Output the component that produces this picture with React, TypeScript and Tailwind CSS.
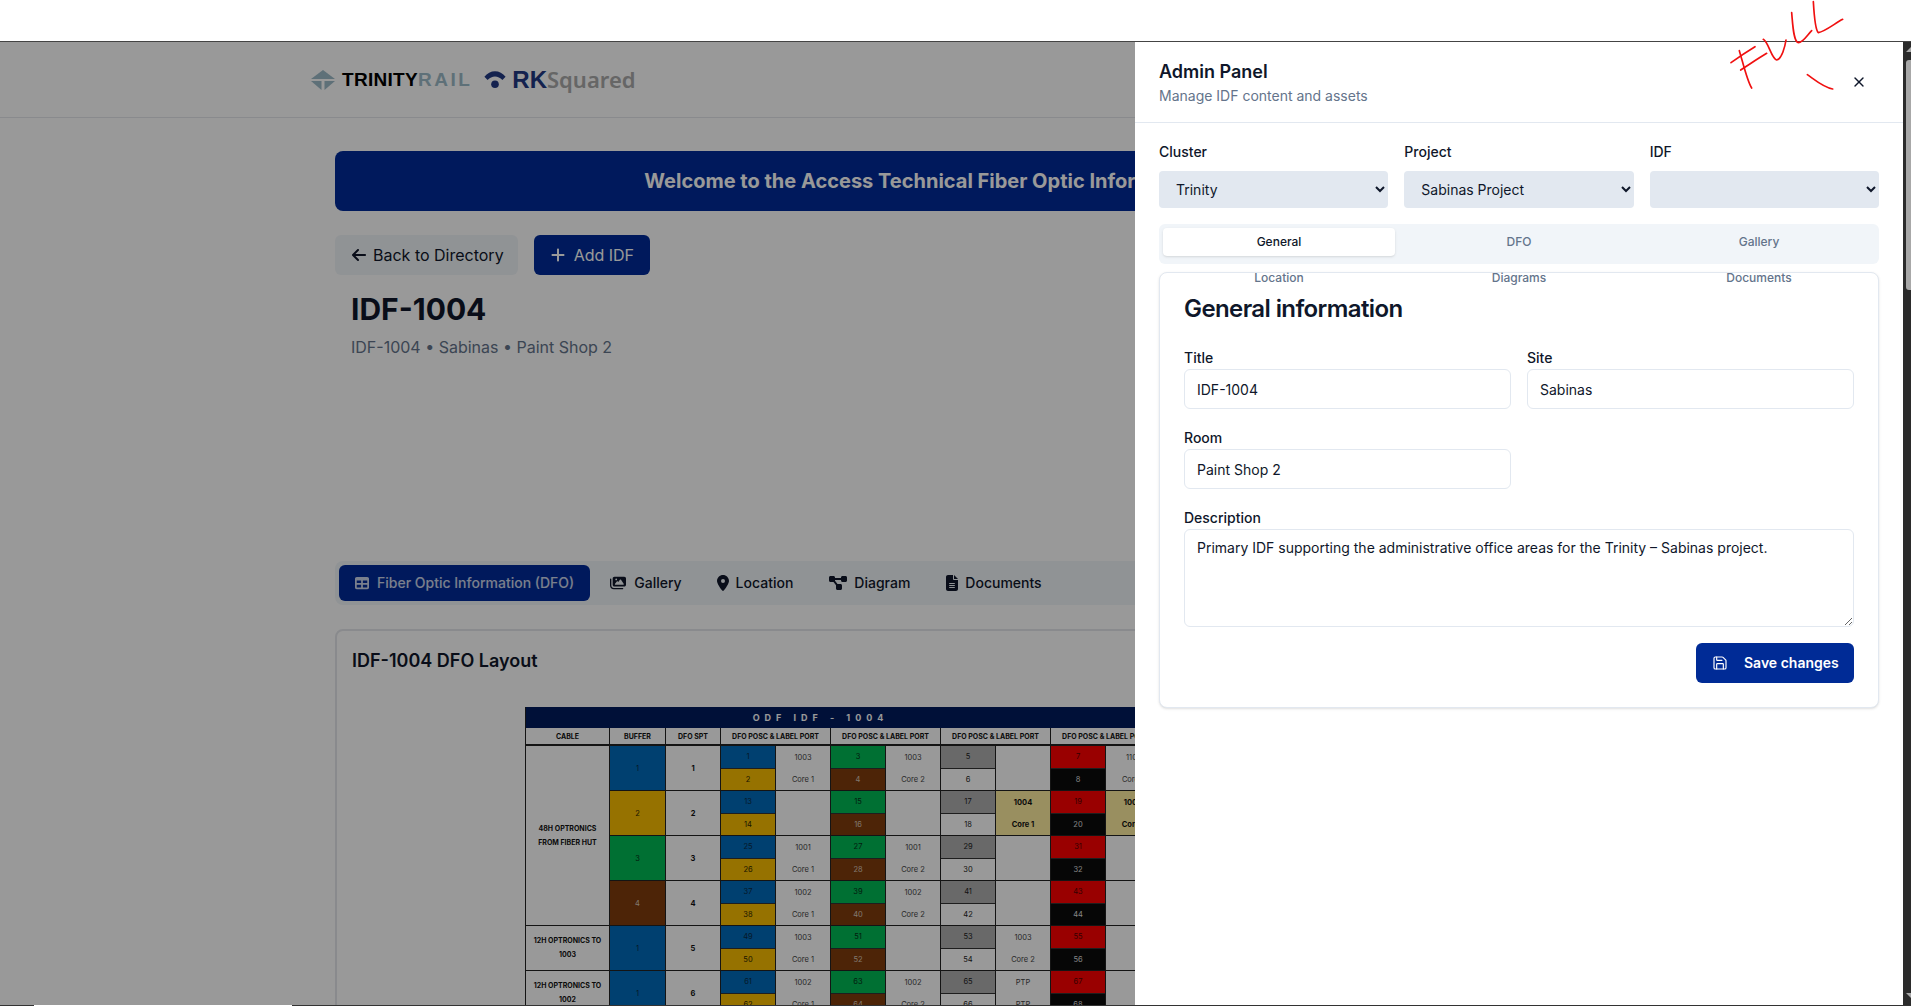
import { X, Save } from "lucide-react";
import { FaArrowLeft, FaPlus, FaTable, FaImages, FaLocationDot, FaDiagramProject, FaFileLines } from "react-icons/fa6";

const blue = "bg-[#006bbb] text-[#0b2a44]";
const yellow = "bg-[#fabf00] text-[#2e2500]";
const green = "bg-[#00bb55] text-[#063018]";
const brown = "bg-[#803c0d] text-[#d8c8b8]";
const gray = "bg-[#b0b0b0] text-[#1a1a1a]";
const white = "bg-white text-[#222]";
const red = "bg-[#ff0000] text-[#500]";
const black = "bg-[#0a0a0a] text-[#ddd]";

function Port({ a, b, ca, cb }: { a: string; b: string; ca: string; cb: string }) {
  return (
    <div className="flex flex-col border-r border-b border-[#222]">
      <div className={`flex-1 flex items-center justify-center border-b border-[#333] ${ca}`}>{a}</div>
      <div className={`flex-1 flex items-center justify-center ${cb}`}>{b}</div>
    </div>
  );
}

function Label({ a, b, tan }: { a?: string; b?: string; tan?: boolean }) {
  return (
    <div className={`flex flex-col border-r border-b border-[#222] ${tan ? "bg-[#ffeea0] font-bold text-[#111]" : "text-[#444]"}`}>
      <div className="flex-1 flex items-center justify-center">{a}</div>
      <div className="flex-1 flex items-center justify-center">{b}</div>
    </div>
  );
}

const rows = [
  { buf: "1", bufc: blue, spt: "1", p: [["1", "2", "1003", "Core 1"], ["3", "4", "1003", "Core 2"], ["5", "6", "", ""], ["7", "8", "1101", "Core 1"]] },
  { buf: "2", bufc: yellow, spt: "2", p: [["13", "14", "", ""], ["15", "16", "", ""], ["17", "18", "1004", "Core 1", "t"], ["19", "20", "1004", "Core 1", "t"]] },
  { buf: "3", bufc: green, spt: "3", p: [["25", "26", "1001", "Core 1"], ["27", "28", "1001", "Core 2"], ["29", "30", "", ""], ["31", "32", "", ""]] },
  { buf: "4", bufc: brown, spt: "4", p: [["37", "38", "1002", "Core 1"], ["39", "40", "1002", "Core 2"], ["41", "42", "", ""], ["43", "44", "", ""]] },
  { buf: "1", bufc: blue, spt: "5", p: [["49", "50", "1003", "Core 1"], ["51", "52", "", ""], ["53", "54", "1003", "Core 2"], ["55", "56", "", ""]] },
  { buf: "1", bufc: blue, spt: "6", p: [["61", "62", "1002", "Core 1"], ["63", "64", "1002", "Core 2"], ["65", "66", "PTP", "PTP"], ["67", "68", "", ""]] },
];
const pairs = [[blue, yellow], [green, brown], [gray, white], [red, black]];

function OdfTable() {
  return (
    <div className="w-[690px] bg-white text-[7.5px] leading-[11px] font-['Inter',sans-serif] border-l border-[#222]">
      <div className="h-[21px] bg-[#001b5e] flex items-center pr-[100px] text-[9px] font-bold text-white tracking-[5px] justify-center">ODF IDF - 1004</div>
      <div className="grid grid-cols-[84px_56px_55px_110px_110px_110px_110px] h-[18px] font-bold text-[7px] text-[#111] text-center border-b-2 border-[#222]">
        {["CABLE", "BUFFER", "DFO SPT", "DFO POSC & LABEL PORT", "DFO POSC & LABEL PORT", "DFO POSC & LABEL PORT", "DFO POSC & LABEL PORT"].map((h, i) => (
          <div key={i} className="flex items-center justify-center whitespace-nowrap overflow-hidden border-r border-[#222]">{h}</div>
        ))}
      </div>
      <div className="grid grid-cols-[84px_56px_55px_55px_55px_55px_55px_55px_55px_55px_55px] auto-rows-[45px]">
        {rows.map((r, i) => (
          <div key={i} className="contents">
            {i === 0 && (
              <div className="row-span-4 flex items-center justify-center text-center font-bold text-[7px] leading-[14px] text-[#111] border-r border-b border-[#222]">48H OPTRONICS<br />FROM FIBER HUT</div>
            )}
            {i === 4 && (
              <div className="flex items-center justify-center text-center font-bold text-[7px] leading-[14px] text-[#111] border-r border-b border-[#222]">12H OPTRONICS TO<br />1003</div>
            )}
            {i === 5 && (
              <div className="flex items-center justify-center text-center font-bold text-[7px] leading-[14px] text-[#111] border-r border-b border-[#222]">12H OPTRONICS TO<br />1002</div>
            )}
            <div className={`flex items-center justify-center border-r border-b border-[#222] ${r.bufc}`}>{r.buf}</div>
            <div className="flex items-center justify-center font-bold text-[#111] border-r border-b border-[#222]">{r.spt}</div>
            {r.p.map((p, j) => (
              <div key={j} className="contents">
                <Port a={p[0]} b={p[1]} ca={pairs[j][0]} cb={pairs[j][1]} />
                <Label a={p[2]} b={p[3]} tan={p[4] === "t"} />
              </div>
            ))}
          </div>
        ))}
      </div>
    </div>
  );
}

function Logos() {
  return (
    <div className="flex items-center h-[76px] pl-[311px] border-b border-[#e5e7eb]">
      <svg width="24" height="20" viewBox="0 0 24 20" className="mr-[7px]" fill="#9dbbc8">
        <polygon points="0,9 12,0 24,9" />
        <polygon points="0,11 10.5,11 10.5,20" />
        <polygon points="13.5,11 24,11 13.5,20" />
      </svg>
      <span className="font-['Liberation_Sans',sans-serif] font-bold text-[19px] leading-none text-black tracking-[0.3px]">TRINITY</span>
      <span className="font-['Liberation_Sans',sans-serif] font-bold text-[19px] leading-none text-[#9dbbc8] tracking-[2.5px]">RAIL</span>
      <svg width="22" height="18" viewBox="0 0 20 17" className="ml-[12px] mr-[6px]" fill="#223a84">
        <path d="M0 5.5 C5 -1.5 15 -1.5 20 5.5 L17 8.5 C13 4 7 4 3 8.5 Z" />
        <circle cx="10" cy="12.5" r="3.6" />
      </svg>
      <span className="font-['Liberation_Sans',sans-serif] font-bold text-[24px] leading-none text-[#223a84]">RK</span>
      <span className="font-['Noto_Sans',sans-serif] font-semibold text-[22px] leading-none mb-[2px] text-[#aaaaaa]">Squared</span>
    </div>
  );
}

function PageBehind() {
  return (
    <div className="bg-white h-full font-['Inter',sans-serif]">
      <Logos />
      <div className="pl-[335px] w-[1575px]">
        <div className="mt-[33px] h-[60px] rounded-lg bg-[#002b99] text-white text-[20px] font-bold flex items-center justify-center">
          Welcome to the Access Technical Fiber Optic Information Portal
        </div>
        <div className="mt-[24px] flex gap-[16px]">
          <div className="h-10 pl-4 pr-[14px] rounded-md bg-[#f1f5f9] flex items-center gap-[6px] text-base text-[#0f172a]"><FaArrowLeft size={16} />Back to Directory</div>
          <div className="h-10 px-4 rounded-md bg-[#002b99] flex items-center gap-2 text-base text-white"><FaPlus size={16} />Add IDF</div>
        </div>
        <h1 className="mt-[16px] pl-4 text-[30px] leading-[36px] font-bold text-[#0f172a]">IDF-1004</h1>
        <p className="mt-[8px] pl-4 text-base leading-6 text-[#64748b]">IDF-1004 • Sabinas • Paint Shop 2</p>
        <div className="mt-[202px] h-[44px] p-1 rounded-lg bg-[#f1f5f9] flex gap-1 text-sm font-medium text-[#0f172a]">
          <div className="px-4 rounded-md bg-[#002b99] text-white/80 flex items-center gap-2"><FaTable size={14} />Fiber Optic Information (DFO)</div>
          <div className="px-4 flex items-center gap-2"><FaImages size={16} />Gallery</div>
          <div className="pl-[13px] pr-4 flex items-center gap-[5px]"><FaLocationDot size={16} />Location</div>
          <div className="px-4 flex items-center gap-[7px]"><FaDiagramProject size={18} />Diagram</div>
          <div className="pl-[14px] pr-4 flex items-center gap-[5px]"><FaFileLines size={16} />Documents</div>
        </div>
        <div className="mt-[24px] rounded-lg border-2 border-[#e5e7eb] h-[500px] pl-[15px] pt-[16px]">
          <h3 className="text-lg leading-7 font-semibold text-[#0f172a]">IDF-1004 DFO Layout</h3>
          <div className="mt-[32px] ml-[173px]"><OdfTable /></div>
        </div>
      </div>
    </div>
  );
}

function Field({ label, value }: { label: string; value: string }) {
  return (
    <label className="block text-sm font-medium leading-5 text-[#0f172a]">
      {label}
      <input readOnly value={value} className="mt-px block w-full h-10 px-3 rounded-md border border-[#e2e8f0] bg-white text-sm font-normal text-[#0f172a]" />
    </label>
  );
}

function Choice({ label, value, opts }: { label: string; value: string; opts: string[] }) {
  return (
    <label className="block text-sm font-medium leading-5 text-[#0f172a]">
      {label}
      <select defaultValue={value} className="mt-[9px] block w-full h-[37px] pl-[13px] pr-1 rounded bg-[#e2e8f0] text-sm font-normal text-[#0f172a]">
        {opts.map((o) => <option key={o} value={o}>{o}</option>)}
      </select>
    </label>
  );
}

function AdminPanel() {
  const tabs = ["General", "DFO", "Gallery", "Location", "Diagrams", "Documents"];
  return (
    <aside className="absolute top-0 right-0 bottom-0 w-[768px] bg-white font-['Inter',sans-serif]">
      <div className="relative h-[81px] px-6 pt-[16px] border-b border-[#e2e8f0]">
        <h2 className="text-[18px] leading-[28px] font-semibold text-[#0f172a]">Admin Panel</h2>
        <p className="text-sm leading-5 text-[#64748b]">Manage IDF content and assets</p>
        <X size={16} className="absolute right-[36px] top-[32px] text-[#0f172a]" />
      </div>
      <div className="px-6 pt-[19px]">
        <div className="grid grid-cols-3 gap-4">
          <Choice label="Cluster" value="Trinity" opts={["Trinity"]} />
          <Choice label="Project" value="Sabinas Project" opts={["Sabinas Project"]} />
          <Choice label="IDF" value="" opts={[""]} />
        </div>
        <div className="mt-4 h-10 p-1 rounded-md bg-[#f1f5f9] grid grid-cols-3 gap-2 auto-rows-[28px] text-xs font-medium text-[#64748b] relative z-10">
          {tabs.map((t, i) => (
            <div key={t} className={`flex items-center justify-center rounded ${i === 0 ? "bg-white text-[#0f172a] shadow-sm" : ""}`}>{t}</div>
          ))}
        </div>
        <div className="mt-2 rounded-lg border border-[#e2e8f0] shadow-sm bg-white px-6 pt-[20px] pb-6">
          <h3 className="text-2xl leading-8 font-semibold tracking-tight text-[#0f172a]">General information</h3>
          <div className="mt-[23px] grid grid-cols-2 gap-x-4 gap-y-[19px]">
            <Field label="Title" value="IDF-1004" />
            <Field label="Site" value="Sabinas" />
            <Field label="Room" value="Paint Shop 2" />
            <div />
            <label className="col-span-2 block text-sm font-medium leading-5 text-[#0f172a]">
              Description
              <textarea readOnly defaultValue="Primary IDF supporting the administrative office areas for the Trinity – Sabinas project." className="mt-px block w-full h-[98px] px-3 py-2 rounded-md border border-[#e2e8f0] text-sm font-normal text-[#0f172a]" />
            </label>
          </div>
          <div className="mt-4 flex justify-end">
            <div className="h-10 w-[158px] pl-4 rounded-md bg-[#002b96] text-white text-sm font-semibold whitespace-nowrap flex items-center gap-4"><Save size={16} strokeWidth={1.75} />Save changes</div>
          </div>
        </div>
      </div>
    </aside>
  );
}

function Scrollbar() {
  return (
    <div className="w-2 shrink-0 bg-[#2b2b2b] pl-[3px] flex flex-col">
      <svg width="5" height="5" viewBox="0 0 5 5" className="mt-[5px]" fill="#a8a8a8"><polygon points="5,0 5,5 0,5" /></svg>
      <div className="mt-[8px] h-[230px] bg-[#a8a8a8] rounded-tl-[3px] rounded-bl-[3px]" />
      <svg width="5" height="5" viewBox="0 0 5 5" className="mt-auto mb-[7px]" fill="#a8a8a8"><polygon points="0,0 5,0 5,5" /></svg>
    </div>
  );
}

export default function App() {
  return (
    <div className="relative h-screen w-full overflow-hidden bg-white flex flex-col">
      <div className="h-[42px] shrink-0 bg-white border-b border-[#444]" />
      <div className="flex-1 min-h-0 flex">
        <div className="relative flex-1 min-w-0 overflow-hidden">
          <PageBehind />
          <div className="absolute inset-0 bg-black/40" />
          <AdminPanel />
        </div>
        <Scrollbar />
      </div>
      <div className="h-px shrink-0 bg-[#333] flex">
        <div className="ml-[34px] w-[258px] bg-white" />
      </div>
      <svg className="absolute left-[1700px] top-0 pointer-events-none" width="211" height="110" viewBox="0 0 633 330" fill="none" stroke="#f01010" strokeWidth="5" strokeLinecap="round" strokeLinejoin="round">
        <path d="M118 152 C128 185 142 245 155 264" />
        <path d="M93 188 C115 172 140 155 165 140" />
        <path d="M122 210 C150 192 175 175 200 160" />
        <path d="M190 118 C205 125 215 178 230 180 C245 178 255 140 258 120" />
        <path d="M275 38 C278 70 280 125 295 128 C310 128 322 105 335 92" />
        <path d="M340 5 C342 40 345 90 355 98 C375 95 405 70 428 58" />
        <path d="M322 224 C345 240 370 262 398 267" />
      </svg>
    </div>
  );
}
